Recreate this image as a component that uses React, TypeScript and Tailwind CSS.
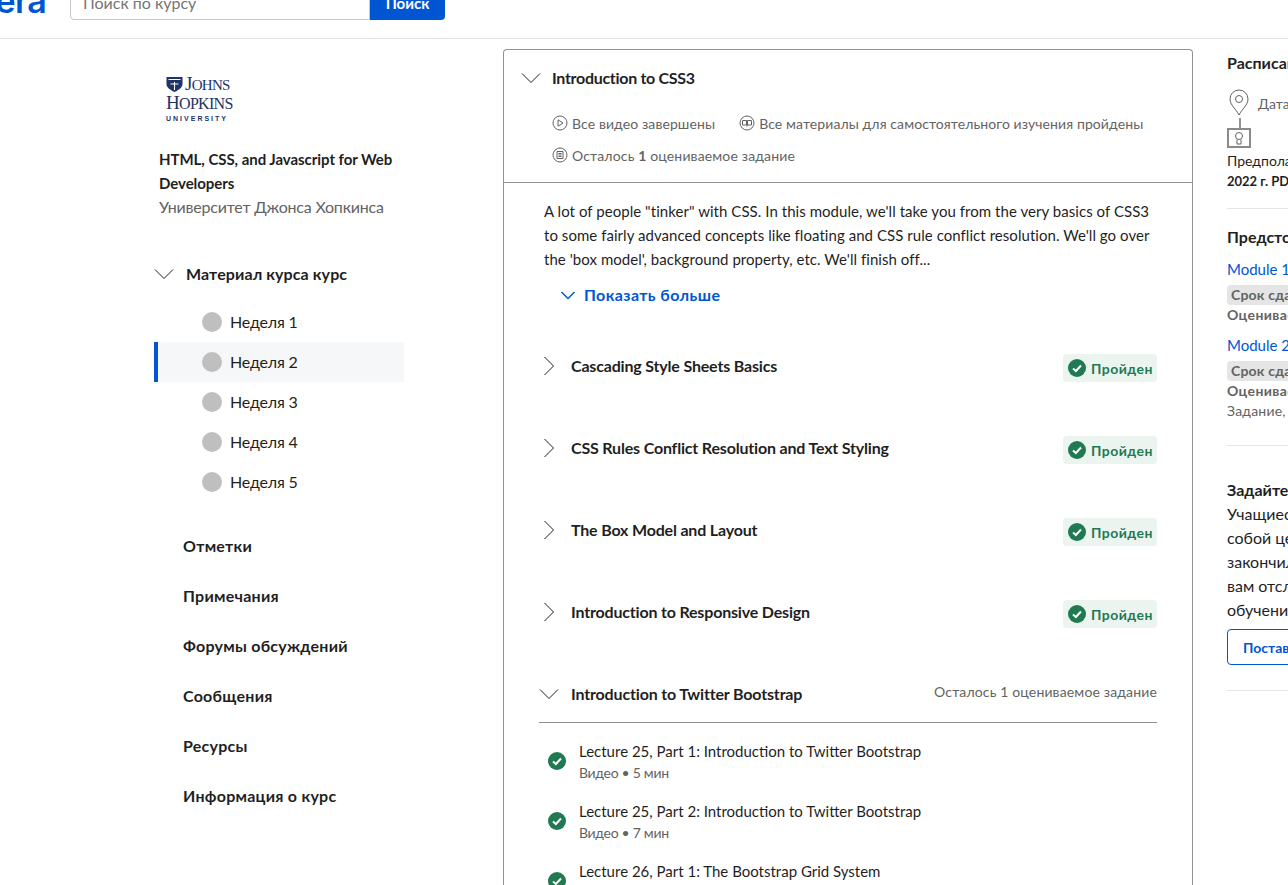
import React from "react";

const Chevron = ({ dir = "down", size = 20 }: { dir?: "down" | "right"; size?: number }) => (
  <svg width={size} height={size} viewBox="0 0 20 20" fill="none" stroke="#1f1f1f" strokeWidth="1" className="shrink-0">
    {dir === "down" ? <path d="M1 5.5 L10 14.5 L19 5.5" /> : <path d="M5.5 1 L14.5 10 L5.5 19" />}
  </svg>
);

const CheckCircle = ({ size = 18 }: { size?: number }) => (
  <svg width={size} height={size} viewBox="0 0 18 18" className="shrink-0">
    <circle cx="9" cy="9" r="9" fill="#1f7a52" />
    <path d="M5 9.4 L7.9 12 L13 6.5" fill="none" stroke="#fff" strokeWidth="2" />
  </svg>
);

const MetaIcon = ({ kind }: { kind: "play" | "book" | "list" }) => (
  <svg width="16" height="16" viewBox="0 0 16 16" fill="none" stroke="#636363" strokeWidth="1" className="shrink-0">
    <circle cx="8" cy="8" r="7" />
    {kind === "play" && <path d="M6 4.8 L11 8 L6 11.2 Z" />}
    {kind === "book" && <path d="M3.5 5.5 H7.5 V10 H3.5 Z M8.5 5.5 H12.5 V10 H8.5 Z M8 5.5 V11.5" />}
    {kind === "list" && <path d="M5 4.5 H11 V11.5 H5 Z M6.5 6.5 H9.5 M6.5 8 H9.5 M6.5 9.5 H9.5" />}
  </svg>
);

const lessons = [
  "Cascading Style Sheets Basics",
  "CSS Rules Conflict Resolution and Text Styling",
  "The Box Model and Layout",
  "Introduction to Responsive Design",
];

const lectures = [
  { title: "Lecture 25, Part 1: Introduction to Twitter Bootstrap", meta: "5 мин" },
  { title: "Lecture 25, Part 2: Introduction to Twitter Bootstrap", meta: "7 мин" },
  { title: "Lecture 26, Part 1: The Bootstrap Grid System", meta: "9 мин" },
];

const navLinks = ["Отметки", "Примечания", "Форумы обсуждений", "Сообщения", "Ресурсы", "Информация о курс"];

const Sidebar = () => (
  <aside className="ml-[154px] w-[250px] shrink-0 pt-[26px]">
    <div className="ml-[12px] h-[50px] w-[70px] font-['Liberation_Serif',serif] text-[#1d3469]">
      <div className="flex h-[17px] items-center gap-[2px]">
        <svg width="17" height="16" viewBox="0 0 16 16">
          <path d="M0 1 H16 V8 C16 12 11 14.5 8 16 C5 14.5 0 12 0 8 Z" fill="#1d3469" />
          <path d="M2 3.5 H14 M8 6 V14 M4 8 H12" stroke="#fff" strokeWidth="1.1" />
        </svg>
        <span className="text-[19px] leading-none tracking-[-0.7px]">J<span className="text-[15px]">OHNS</span></span>
      </div>
      <div className="mt-[1px] h-[19px] text-[19px] leading-[19px] tracking-[-0.7px]">H<span className="text-[16px]">OPKINS</span></div>
      <div className="mt-[2px] font-['Liberation_Sans',sans-serif] text-[7px] font-bold leading-[9px] tracking-[2px]">UNIVERSITY</div>
    </div>
    <h2 className="ml-[5px] mt-[22px] text-[15px] font-bold leading-[24px] tracking-[-0.05px] text-[#1f1f1f]">
      HTML, CSS, and Javascript for Web Developers
    </h2>
    <p className="ml-[5px] text-[16px] leading-[24px] tracking-[-0.2px] text-[#636363]">Университет Джонса Хопкинса</p>

    <div className="mt-[43px] flex h-[24px] items-center gap-[12px]">
      <Chevron />
      <span className="text-[16px] font-bold tracking-[0.1px] text-[#1f1f1f]">Материал курса курс</span>
    </div>

    <ul className="mt-[16px]">
      {[1, 2, 3, 4, 5].map((n) => (
        <li
          key={n}
          className={`flex h-[40px] items-center gap-[8px] text-[16px] tracking-[-0.2px] text-[#1f1f1f] ${
            n === 2 ? "border-l-[4px] border-[#0056d2] bg-[#f5f7f8] pl-[44px]" : "pl-[48px]"
          }`}
        >
          <span className="h-[20px] w-[20px] rounded-full bg-[#bfbfbf]" />
          Неделя {n}
        </li>
      ))}
    </ul>

    <ul className="mt-[19px] pl-[29px]">
      {navLinks.map((link) => (
        <li key={link} className="flex h-[50px] items-center text-[16px] font-bold tracking-[0.25px] text-[#1f1f1f]">
          {link}
        </li>
      ))}
    </ul>
  </aside>
);

const CourseCard = () => (
  <section className="ml-[99px] w-[690px] shrink-0 rounded-t-[4px] border border-b-0 border-[#929292]">
    <div className="h-[133px] border-b border-[#929292] pl-[17px] pt-[16px]">
      <div className="flex h-[24px] items-center gap-[11px]">
        <Chevron />
        <h3 className="text-[16px] font-bold tracking-[-0.3px] text-[#1f1f1f]">Introduction to CSS3</h3>
      </div>
      <div className="ml-[31px] mt-[21px] flex h-[24px] items-center gap-[24px] text-[14px] tracking-[0.1px] text-[#636363]">
        <span className="flex items-center gap-[4px]"><MetaIcon kind="play" />Все видео завершены</span>
        <span className="flex items-center gap-[4px]"><MetaIcon kind="book" />Все материалы для самостоятельного изучения пройдены</span>
      </div>
      <div className="ml-[31px] mt-[8px] flex h-[24px] items-center gap-[4px] text-[14px] tracking-[0.15px] text-[#636363]">
        <MetaIcon kind="list" />
        <span>Осталось <b>1</b> оцениваемое задание</span>
      </div>
    </div>

    <div className="pl-[35px] pr-[35px]">
      <p className="ml-[5px] pt-[16px] text-[15px] leading-[24px] tracking-[0.05px] text-[#1f1f1f]">
        A lot of people "tinker" with CSS. In this module, we'll take you from the very basics of CSS3 to some fairly advanced concepts like floating and CSS rule conflict resolution. We'll go over the 'box model', background property, etc. We'll finish off...
      </p>
      <button className="ml-[21px] mt-[12px] flex h-[24px] items-center gap-[8px] text-[16px] font-bold tracking-[0.4px] text-[#0056d2]">
        <svg width="16" height="16" viewBox="0 0 16 16" fill="none" stroke="#0056d2" strokeWidth="1.5">
          <path d="M1.5 5 L8 11.5 L14.5 5" />
        </svg>
        Показать больше
      </button>

      <div className="mt-[19px]">
        {lessons.map((lesson) => (
          <div key={lesson} className="flex h-[82px] items-center justify-between">
            <div className="flex items-center gap-[12px] pb-[2px]">
              <Chevron dir="right" />
              <span className="text-[16px] font-bold tracking-[-0.18px] text-[#1f1f1f]">{lesson}</span>
            </div>
            <span className="mt-[2px] flex h-[28px] w-[94px] items-center gap-[5px] rounded-[4px] bg-[#ecf4f0] pl-[5px] text-[14px] font-bold tracking-[0.45px] text-[#1f7a52]">
              <CheckCircle />
              Пройден
            </span>
          </div>
        ))}
      </div>

      <div className="flex h-[69px] items-center justify-between border-b border-[#929292] pt-[12px]">
        <div className="flex items-center gap-[12px]">
          <Chevron />
          <span className="text-[16px] font-bold tracking-[-0.16px] text-[#1f1f1f]">Introduction to Twitter Bootstrap</span>
        </div>
        <span className="pb-[6px] text-[14px] tracking-[0.15px] text-[#636363]">Осталось 1 оцениваемое задание</span>
      </div>

      <ul className="pt-[17px]">
        {lectures.map((lecture) => (
          <li key={lecture.title} className="flex h-[60px] items-start gap-[13px] pl-[9px]">
            <span className="pt-[12px]"><CheckCircle /></span>
            <div className="-mt-[1px]">
              <div className="text-[15px] leading-[24px] text-[#1f1f1f]">{lecture.title}</div>
              <div className="text-[14px] leading-[20px] tracking-[-0.3px] text-[#636363]">Видео • {lecture.meta}</div>
            </div>
          </li>
        ))}
      </ul>
    </div>
  </section>
);

const RightRail = () => (
  <aside className="ml-[34px] w-[260px] shrink-0 whitespace-nowrap text-[#1f1f1f]">
    <h3 className="mt-[2px] text-[16px] font-bold leading-[24px]">Расписание</h3>
    <div className="mt-[13px] flex h-[30px] items-center gap-[9px] pl-[2px] text-[14px] text-[#636363]">
      <svg width="20" height="28" viewBox="0 0 20 28" fill="none" stroke="#636363" strokeWidth="1">
        <path d="M10 26 C7 20 1 16 1 10 A9 9 0 0 1 19 10 C19 16 13 20 10 26 Z" />
        <circle cx="10" cy="10" r="3.5" />
      </svg>
      Дата начала
    </div>
    <div className="ml-[12px] h-[10px] w-0 border-l-2 border-dashed border-[#929292]" />
    <div className="flex h-[20px] w-[24px] items-center justify-center border-2 border-[#8a8a8a]">
      <svg width="10" height="15" viewBox="0 0 10 15" fill="none" stroke="#636363" strokeWidth="1">
        <circle cx="5" cy="5" r="3.5" />
        <path d="M3 8.5 V13 H7 V8.5" />
      </svg>
    </div>
    <p className="mt-[3px] text-[14px] leading-[20px]">Предполагаемая дата</p>
    <p className="text-[13px] font-bold leading-[20px]">2022 г. PDT</p>
    <div className="mt-[17px] border-t border-[#e5e5e5] pt-[16px]">
      <h3 className="text-[16px] font-bold leading-[24px]">Предстоящие</h3>
      {[1, 2].map((n) => (
        <div key={n} className="mt-[8px]">
          <div className="text-[15px] leading-[24px] text-[#0056d2]">Module {n}</div>
          <span className="mt-[4px] block h-[20px] w-[120px] rounded-[4px] bg-[#e5e5e5] pl-[4px] text-[14px] font-bold leading-[20px] tracking-[0.2px] text-[#636363]">Срок сдачи</span>
          <div className="text-[14px] font-bold leading-[20px] tracking-[0.4px] text-[#636363]">Оцениваемое</div>
          {n === 2 && <div className="text-[14px] leading-[20px] tracking-[0.2px] text-[#636363]">Задание, оцениваемое</div>}
        </div>
      ))}
    </div>
    <div className="mt-[24px] border-t border-[#e5e5e5] pt-[32px]">
      <h3 className="text-[16px] font-bold leading-[24px]">Задайте цель</h3>
      {["Учащиеся", "собой цели", "закончили", "вам отслеживать", "обучении"].map((line) => (
        <p key={line} className="text-[16px] leading-[24px]">{line}</p>
      ))}
      <button className="mt-[7px] flex h-[36px] w-[140px] items-center rounded-[4px] border border-[#0056d2] pl-[15px] text-[14px] font-bold text-[#0056d2]">
        Поставить цель
      </button>
      <div className="mt-[25px] border-t border-[#e5e5e5]" />
    </div>
  </aside>
);

export default function App() {
  return (
    <div className="h-[885px] w-[1288px] overflow-hidden bg-white font-['Lato','Liberation_Sans',sans-serif]">
      <header className="flex h-[39px] items-end border-b border-[#e1e1e1] pb-[18px]">
        <div className="flex w-[46px] shrink-0 -translate-y-[9px] justify-end overflow-visible">
          <span className="font-['Inter',sans-serif] text-[34px] font-semibold leading-[20px] tracking-[-0.8px] text-[#0056d2]">era</span>
        </div>
        <div className="ml-[24px] flex h-[40px] w-[375px]">
          <div className="flex w-[300px] items-center rounded-l-[4px] border border-[#c6c6c6] pl-[12px] pt-[6px] text-[16px] text-[#757575]">Поиск по курсу</div>
          <button className="w-[75px] rounded-r-[4px] bg-[#0056d2] pt-[7px] text-[15px] font-bold text-white">Поиск</button>
        </div>
      </header>
      <main className="flex pt-[10px]">
        <Sidebar />
        <CourseCard />
        <RightRail />
      </main>
    </div>
  );
}
